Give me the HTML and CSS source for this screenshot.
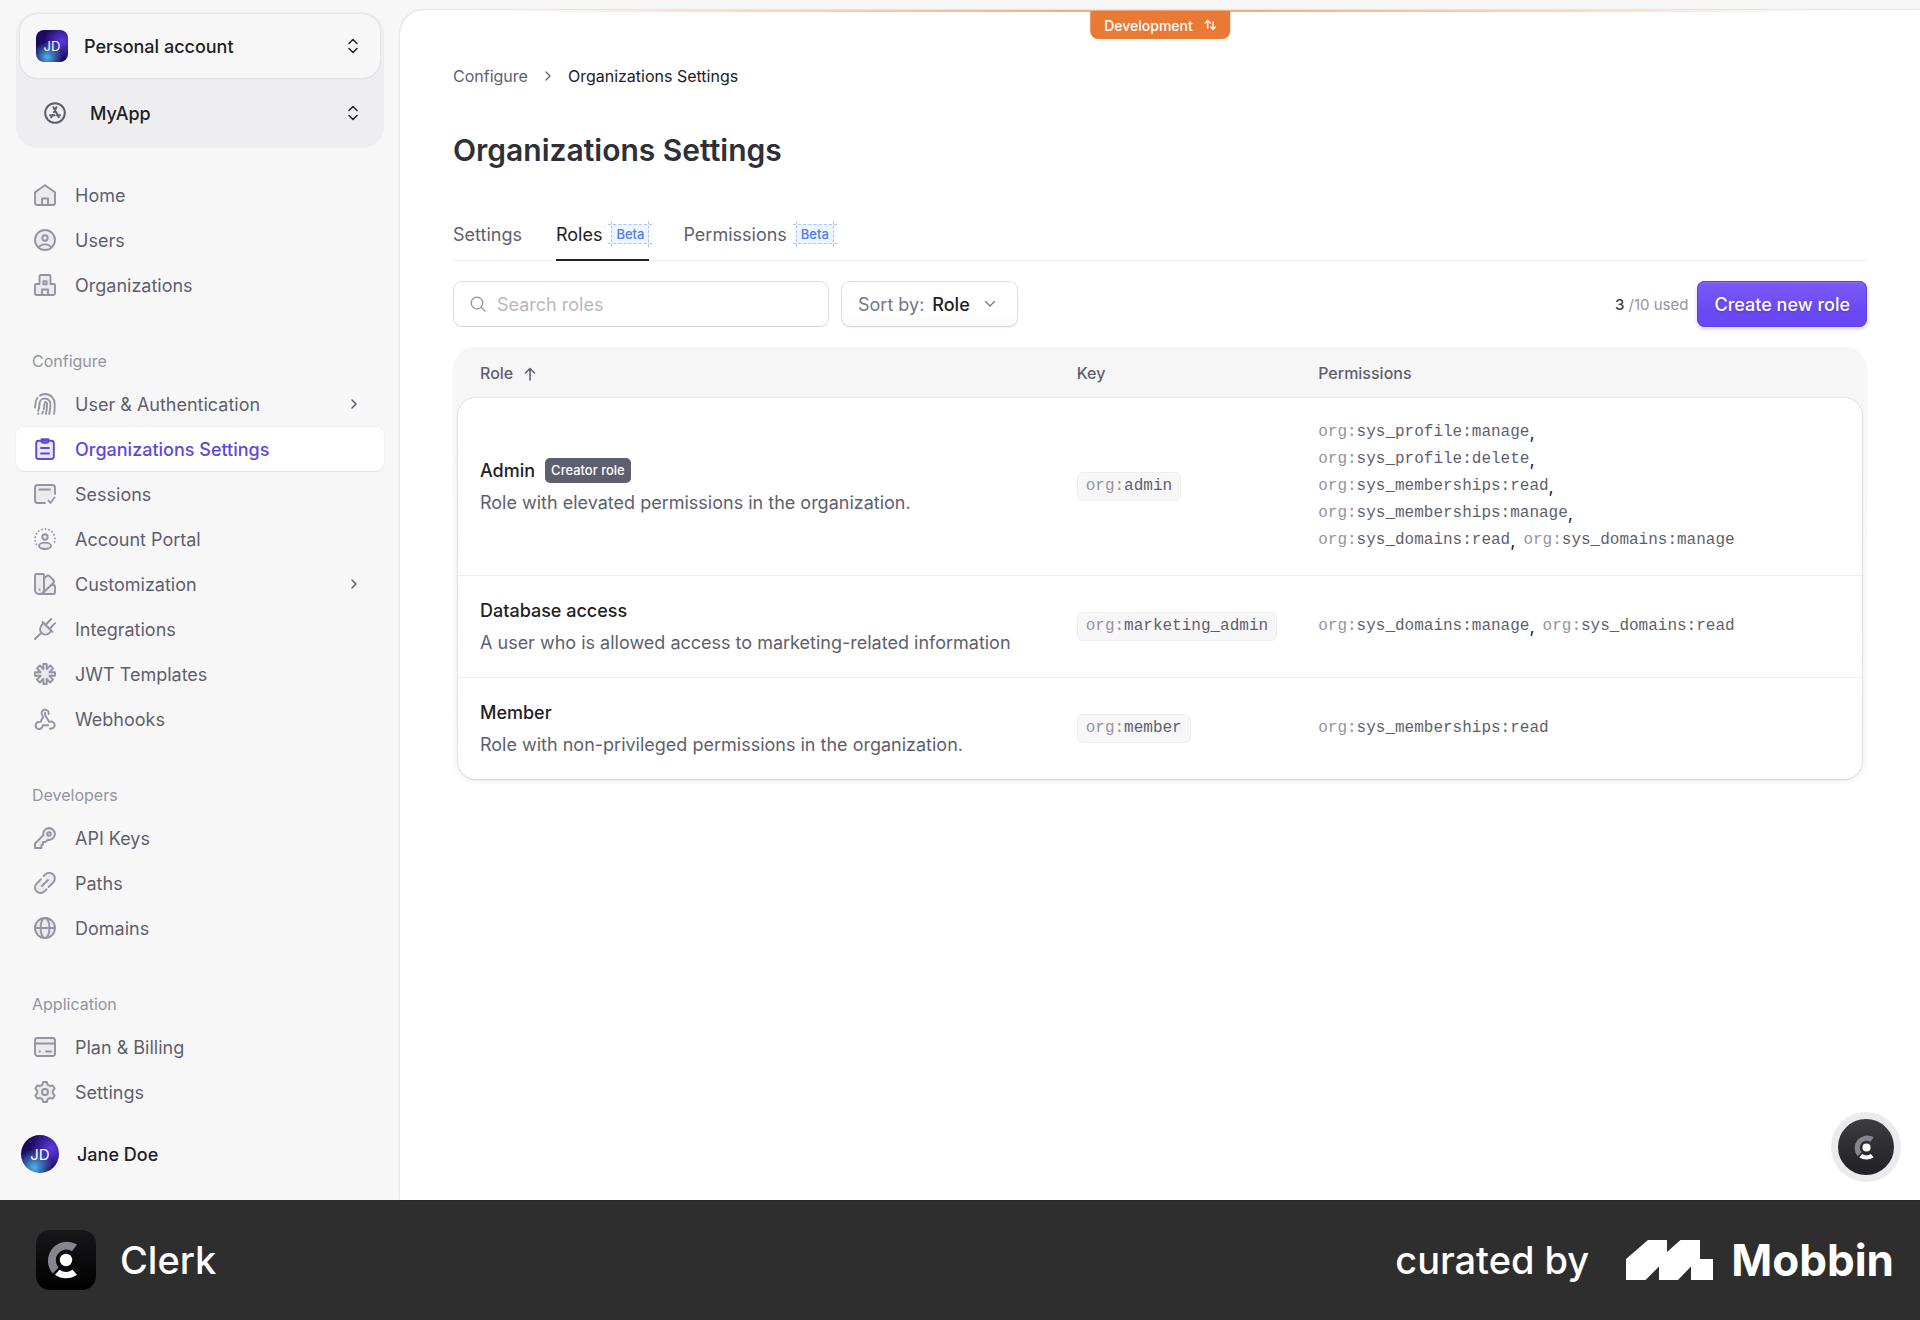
FILE: index.html
```html
<!DOCTYPE html>
<html lang="en">
<head>
    <meta charset="UTF-8">
    <meta name="viewport" content="width=device-width, initial-scale=1.0">
    <title>Organizations Settings</title>
    <link rel="stylesheet" href="styles.css">
</head>
<body>
    <div class="app">
        <aside class="sidebar">
            <div class="switcher">
                <button class="switcher-account" type="button">
                    <span class="avatar avatar-square">JD</span>
                    <span class="switcher-name">Personal account</span>
                    <svg class="updown" viewBox="0 0 12 18"><path d="M2 6.5 6 2.5l4 4M2 11.5l4 4 4-4"/></svg>
                </button>
                <button class="switcher-app" type="button">
                    <svg class="app-icon" viewBox="0 0 22 22"><circle cx="11" cy="11" r="9.8"/><path d="M9.4 5.2 14.8 15M12.4 5.2 10 10.2M8.4 13 7.2 15.4M6 13.2h4.6M13 13.2h3"/></svg>
                    <span class="switcher-name">MyApp</span>
                    <svg class="updown" viewBox="0 0 12 18"><path d="M2 6.5 6 2.5l4 4M2 11.5l4 4 4-4"/></svg>
                </button>
            </div>

            <nav class="nav">
                <a class="nav-link" href="#">
                    <svg class="icon" viewBox="0 0 22 22"><path class="tint" d="M1 8.2 11 1.2l10 7V19a2 2 0 0 1-2 2H3a2 2 0 0 1-2-2z"/><path d="M8 21v-6.5h6V21"/></svg>
                    Home
                </a>
                <a class="nav-link" href="#">
                    <svg class="icon" viewBox="0 0 22 22"><circle class="tint" cx="11" cy="11" r="10"/><circle cx="11" cy="9" r="2.7"/><path d="M4.8 18.6c1.2-2.2 3.4-3.2 6.2-3.2s5 1 6.2 3.2"/></svg>
                    Users
                </a>
                <a class="nav-link" href="#">
                    <svg class="icon" viewBox="0 0 22 22"><path class="tint" d="M5.5 10V2.5A1.5 1.5 0 0 1 7 1h8a1.5 1.5 0 0 1 1.5 1.5V10H20a1 1 0 0 1 1 1v8.5a1.5 1.5 0 0 1-1.5 1.5h-17A1.5 1.5 0 0 1 1 19.5V11a1 1 0 0 1 1-1z"/><path d="M9.4 7.2h3.2v3.2H9.4zM8 21v-5.5h6V21"/></svg>
                    Organizations
                </a>

                <h2 class="nav-title">Configure</h2>
                <a class="nav-link" href="#">
                    <svg class="icon" viewBox="0 0 22 22"><path d="M1 14.5c.4-1.3.5-2.700.5-4.200A9.800 9.800 0 0 1 3.500 5M6 2.600A9.600 9.600 0 0 1 11 1c5.600 0 9.700 4.300 9.700 9.800 0 3.700 0 6.700-.6 10M4.200 17.800c.9-2 1.300-4.600 1.300-7C5.500 7.600 8 5.500 11 5.500s5.400 2.300 5.400 5.500c0 3.500-.2 6.700-1.200 10M4.200 20.800l.2-.4M8.300 20.400l.7-1.800M9.800 16c.5-1.600.6-3.400.6-5.200M11.800 20.800c1-3 1.300-6 1.200-9.800a2 2 0 0 0-2-2"/></svg>
                    User &amp; Authentication
                    <svg class="nav-arrow" viewBox="0 0 8 12"><path d="m2 2 4 4-4 4"/></svg>
                </a>
                <a class="nav-link nav-link-active" href="#">
                    <svg class="icon" viewBox="0 0 22 22"><rect class="tint" x="2.2" y="2.8" width="17.6" height="18.2" rx="2.5"/><path class="tint" d="M7.5 1.2h7v1.6a2 2 0 0 1-2 2h-3a2 2 0 0 1-2-2zM7 10h8M7 15.5h8"/></svg>
                    Organizations Settings
                </a>
                <a class="nav-link" href="#">
                    <svg class="icon" viewBox="0 0 22 22"><path class="tint" stroke="none" d="M1.5 2h19v10l-6 8H2z"/><path d="M11 20H3.5A2.5 2.5 0 0 1 1 17.5v-13A2.5 2.5 0 0 1 3.5 2h15A2.5 2.5 0 0 1 21 4.5V11M5.5 6.5h10.500M14.500 17.500l2 2.500 4-5.500"/></svg>
                    Sessions
                </a>
                <a class="nav-link" href="#">
                    <svg class="icon" viewBox="0 0 22 22"><path class="dots" d="M2.500 16.200A10 10 0 1 1 19.500 16.200"/><circle class="tint" cx="11" cy="9" r="2.700"/><ellipse class="tint" cx="11" cy="17.800" rx="6" ry="3.200"/></svg>
                    Account Portal
                </a>
                <a class="nav-link" href="#">
                    <svg class="icon" viewBox="0 0 22 22"><path class="tint" d="M1 2.5A1.5 1.5 0 0 1 2.5 1h6A1.5 1.5 0 0 1 10 2.5V17a4 4 0 0 1-4 4H5a4 4 0 0 1-4-4z"/><path class="tint" d="M10 5.5 13 2.700a1.500 1.500 0 0 1 2 0l4.800 4.800a1.500 1.500 0 0 1 0 2L9 20M17 12h2.500a1.500 1.500 0 0 1 1.500 1.500v6a1.500 1.500 0 0 1-1.500 1.500H6"/><path d="M5.500 16.500v.2"/></svg>
                    Customization
                    <svg class="nav-arrow" viewBox="0 0 8 12"><path d="m2 2 4 4-4 4"/></svg>
                </a>
                <a class="nav-link" href="#">
                    <svg class="icon" viewBox="0 0 22 22"><path class="tint" d="m9.500 4.800 8 8-1.800 1.800c-2.500 2.500-5.700 2.700-8 .5s-2.200-5.800.2-8.200z"/><path d="M7.400 14.800 1 21M8.500 3.800 18.500 13.800M12 6.500 17.200 1M16 10.500 21 5.200"/></svg>
                    Integrations
                </a>
                <a class="nav-link" href="#">
                    <svg class="icon" viewBox="0 0 22 22"><path class="tint" d="M9.300 1h3.400v5.200l3.500-3.800 2.900 2.900-3.700 3.900H21v3.600h-5.600l3.700 3.900-2.900 2.900-3.500-3.800V21H9.300v-5.200l-3.500 3.800-2.900-2.900 3.700-3.900H1V9.200h5.600L2.900 5.300l2.900-2.900 3.500 3.800z"/></svg>
                    JWT Templates
                </a>
                <a class="nav-link" href="#">
                    <svg class="icon" viewBox="0 0 22 22"><path d="M8.300 7.200a3.500 3.500 0 1 1 6.200-1M11 4.800v2l4.200 7.200a3.600 3.600 0 1 1 .8 6.500M9.200 8.500 6.500 14M5 14a3.500 3.500 0 1 0 3.300 5l.5-1.800h5.400"/></svg>
                    Webhooks
                </a>

                <h2 class="nav-title">Developers</h2>
                <a class="nav-link" href="#">
                    <svg class="icon" viewBox="0 0 22 22"><path class="tint" d="M15 1a6 6 0 1 1-1.200 11.900L11.500 15H9v2.500L7.500 18v3H1v-4.500l8.300-8.300A6 6 0 0 1 15 1z"/><circle cx="15" cy="7" r="1.8"/></svg>
                    API Keys
                </a>
                <a class="nav-link" href="#">
                    <svg class="icon" viewBox="0 0 22 22"><path class="tint" d="m9.500 4.200 1.700-1.700a5.600 5.600 0 0 1 8 0 5.600 5.600 0 0 1 0 8L14.500 15.200M7 7.200 2.600 11.600a5.500 5.500 0 0 0 0 7.800 5.500 5.500 0 0 0 7.800 0l2.100-2.100"/><path d="m8 14 6-6"/></svg>
                    Paths
                </a>
                <a class="nav-link" href="#">
                    <svg class="icon" viewBox="0 0 22 22"><circle class="tint" cx="11" cy="11" r="10"/><ellipse cx="11" cy="11" rx="4.5" ry="10"/><path d="M1 11h20"/></svg>
                    Domains
                </a>

                <h2 class="nav-title">Application</h2>
                <a class="nav-link" href="#">
                    <svg class="icon" viewBox="0 0 22 22"><rect class="tint" x="1" y="2" width="20" height="18" rx="2.5"/><path d="M1 7.5h20M5.500 15.500h.5M12 15.500h5"/></svg>
                    Plan &amp; Billing
                </a>
                <a class="nav-link" href="#">
                    <svg class="icon" viewBox="0 0 22 22"><path class="tint" d="M9.200 1h3.600l1 2.900 2 1.100 3-.6 1.900 3-1.900 2.400v2.400l1.900 2.400-1.900 3-3-.6-2 1.100-1 2.900H9.200l-1-2.900-2-1.100-3 .6-1.900-3 1.900-2.400V9.800L1.300 7.400l1.900-3 3 .6 2-1.100z"/><circle cx="11" cy="11" r="3"/></svg>
                    Settings
                </a>
            </nav>

            <button class="user" type="button">
                <span class="avatar avatar-round">JD</span>
                Jane Doe
            </button>
        </aside>

        <main class="main">
            <button class="env-badge" type="button">
                Development
                <svg class="env-icon" viewBox="0 0 12 12"><path d="M3.500 9V1.500M1 4l2.500-2.500L6 4M8.800 3v7.500M6.500 8l2.300 2.500L11 8"/></svg>
            </button>

            <nav class="breadcrumb">
                <a href="#">Configure</a>
                <svg class="breadcrumb-arrow" viewBox="0 0 8 12"><path d="m2 2 4 4-4 4"/></svg>
                <span class="breadcrumb-current">Organizations Settings</span>
            </nav>

            <h1 class="title">Organizations Settings</h1>

            <nav class="tabs">
                <a class="tab" href="#">Settings</a>
                <a class="tab tab-active" href="#">Roles <span class="beta">Beta</span></a>
                <a class="tab" href="#">Permissions <span class="beta">Beta</span></a>
            </nav>

            <div class="toolbar">
                <label class="search">
                    <svg class="search-icon" viewBox="0 0 16 16"><circle cx="7" cy="7" r="5.8"/><path d="m11.300 11.300 3.700 3.700"/></svg>
                    <input type="search" placeholder="Search roles" aria-label="Search roles">
                </label>
                <div class="sort">
                    <label for="sort">Sort by:</label>
                    <select id="sort">
                        <option>Role</option>
                        <option>Key</option>
                    </select>
                    <svg class="sort-arrow" viewBox="0 0 12 8"><path d="m1.500 1.500 4.500 4.500 4.500-4.500"/></svg>
                </div>
                <p class="usage"><strong>3</strong> /10 used</p>
                <button class="create" type="button">Create new role</button>
            </div>

            <div class="table-wrap">
                <table class="roles">
                    <thead>
                        <tr>
                            <th class="col-role">Role <svg class="sort-up" viewBox="0 0 12 14"><path d="M6 13V1.500M1.500 6 6 1.500 10.500 6"/></svg></th>
                            <th class="col-key">Key</th>
                            <th>Permissions</th>
                        </tr>
                    </thead>
                    <tbody>
                        <tr>
                            <td>
                                <div class="role-name">Admin <span class="creator">Creator role</span></div>
                                <div class="role-desc">Role with elevated permissions in the organization.</div>
                            </td>
                            <td><code class="key"><span class="org">org:</span>admin</code></td>
                            <td>
                                <ul class="perms">
                                    <li><code><span class="org">org:</span>sys_profile:manage</code>,</li>
                                    <li><code><span class="org">org:</span>sys_profile:delete</code>,</li>
                                    <li><code><span class="org">org:</span>sys_memberships:read</code>,</li>
                                    <li><code><span class="org">org:</span>sys_memberships:manage</code>,</li>
                                    <li><code><span class="org">org:</span>sys_domains:read</code>,</li>
                                    <li><code><span class="org">org:</span>sys_domains:manage</code></li>
                                </ul>
                            </td>
                        </tr>
                        <tr>
                            <td>
                                <div class="role-name">Database access</div>
                                <div class="role-desc">A user who is allowed access to marketing-related information</div>
                            </td>
                            <td><code class="key"><span class="org">org:</span>marketing_admin</code></td>
                            <td>
                                <ul class="perms">
                                    <li><code><span class="org">org:</span>sys_domains:manage</code>,</li>
                                    <li><code><span class="org">org:</span>sys_domains:read</code></li>
                                </ul>
                            </td>
                        </tr>
                        <tr>
                            <td>
                                <div class="role-name">Member</div>
                                <div class="role-desc">Role with non-privileged permissions in the organization.</div>
                            </td>
                            <td><code class="key"><span class="org">org:</span>member</code></td>
                            <td>
                                <ul class="perms">
                                    <li><code><span class="org">org:</span>sys_memberships:read</code></li>
                                </ul>
                            </td>
                        </tr>
                    </tbody>
                </table>
            </div>

            <button class="help" type="button" aria-label="Clerk">
                <svg viewBox="0 0 38 38"><path class="logo-arc" d="M30 3.600 25 10.200A10.600 10.600 0 0 0 11.600 26.400L5.800 32.400A19 19 0 0 1 30 3.600z"/><circle class="logo-dot" cx="19" cy="19" r="6.2"/><path class="logo-base" d="M8 33.800 12.500 28.800A11.500 11.500 0 0 0 25.500 28.800L30 33.800A19 19 0 0 1 8 33.800z"/></svg>
            </button>
        </main>
    </div>

    <footer class="footer">
        <div class="footer-logo">
            <svg viewBox="0 0 38 38"><path class="logo-arc" d="M30 3.600 25 10.200A10.600 10.600 0 0 0 11.600 26.400L5.800 32.400A19 19 0 0 1 30 3.600z"/><circle class="logo-dot" cx="19" cy="19" r="6.2"/><path class="logo-base" d="M8 33.800 12.500 28.800A11.500 11.500 0 0 0 25.500 28.800L30 33.800A19 19 0 0 1 8 33.800z"/></svg>
        </div>
        <span class="footer-name">Clerk</span>
        <span class="curated">curated by</span>
        <svg class="mobbin-mark" viewBox="0 0 87 40"><path d="M0 19 22 0h19v12L54.500 0H74v19h13v21H65V26.500L52 40H33V26.500L19.500 40H0z"/></svg>
        <span class="mobbin-name">Mobbin</span>
    </footer>
</body>
</html>
```

FILE: styles.css
```css
* {
    box-sizing: border-box;
}
body {
    margin: 0;
    min-height: 100vh;
    display: flex;
    flex-direction: column;
    font-family: Inter, "Liberation Sans", sans-serif;
    font-size: 18px;
    color: #212126;
    background-color: #f7f7f8;
}
button, input, select {
    font: inherit;
    color: inherit;
}
button {
    border: none;
    background: none;
    padding: 0;
    cursor: pointer;
}
a {
    color: inherit;
    text-decoration: none;
}
svg {
    display: block;
    flex: none;
    fill: none;
    stroke: currentColor;
    stroke-linecap: round;
    stroke-linejoin: round;
}
code {
    font-family: "Liberation Mono", monospace;
    font-size: 16px;
}
.app {
    flex: 1;
    display: flex;
}

/* Sidebar */
.sidebar {
    flex: none;
    width: 400px;
    padding: 12px 16px 27px;
    display: flex;
    flex-direction: column;
}
.switcher {
    padding: 2px 4px 0;
    border-radius: 22px;
    background-color: #eeeef0;
}
.switcher-account, .switcher-app {
    width: 100%;
    display: flex;
    align-items: center;
    font-weight: 500;
    text-align: left;
}
.switcher-account {
    height: 64px;
    padding: 0 21px 0 16px;
    gap: 16px;
    border-radius: 18px;
    background-color: #f7f7f8;
    box-shadow: 0 0 2px rgba(0,0,0,0.1), 0 1px 2px rgba(0,0,0,0.06);
}
.switcher-app {
    height: 70px;
    padding: 0 21px 0 24px;
    gap: 24px;
}
.switcher-name {
    flex: 1;
}
.updown {
    width: 12px;
    height: 18px;
    stroke-width: 1.5;
}
.app-icon {
    width: 22px;
    height: 22px;
    color: #5e5f6e;
    stroke-width: 2;
}
.avatar {
    display: flex;
    align-items: center;
    justify-content: center;
    flex: none;
    color: #fff;
    font-weight: 400;
    background: radial-gradient(circle at 35% 85%, #4fb3ea 0, rgba(79,179,234,0) 45%), radial-gradient(circle at 80% 35%, #5b3be0 0, rgba(91,59,224,0) 55%), #1b0a5e;
}
.avatar-square {
    width: 32px;
    height: 32px;
    border-radius: 8px;
    font-size: 13px;
}
.avatar-round {
    width: 38px;
    height: 38px;
    border-radius: 50%;
    font-size: 15px;
}
.nav {
    margin-top: 25px;
    display: flex;
    flex-direction: column;
    gap: 1px;
}
.nav-link {
    height: 44px;
    padding: 0 26px 0 18px;
    display: flex;
    align-items: center;
    gap: 19px;
    border-radius: 8px;
    color: #5e5f6e;
}
.nav-link-active {
    color: #6047e0;
    font-weight: 500;
    background-color: #fff;
    box-shadow: 0 0 2px rgba(0,0,0,0.1), 0 1px 1px rgba(0,0,0,0.06);
}
.nav-title {
    margin: 43px 0 10px;
    padding-left: 16px;
    font-size: 16px;
    line-height: 20px;
    font-weight: 400;
    color: #9394a1;
}
.icon {
    width: 22px;
    height: 22px;
    color: #9394a1;
    stroke-width: 1.9;
}
.nav-link-active .icon {
    color: #6047e0;
}
.tint {
    fill: currentColor;
    fill-opacity: 0.12;
}
.dots {
    stroke-dasharray: 0 3.6;
    stroke-width: 1.9;
}
.nav-arrow {
    width: 8px;
    height: 12px;
    margin-left: auto;
    stroke-width: 1.5;
}
.user {
    margin: auto auto 0 5px;
    display: flex;
    align-items: center;
    gap: 18px;
    font-weight: 500;
}

/* Main panel */
.main {
    flex: 1;
    min-width: 0;
    position: relative;
    margin-top: 10px;
    padding: 52px 53px;
    border-top-left-radius: 24px;
    background: linear-gradient(90deg, rgba(232,122,54,0) 5%, rgba(232,122,54,0.7) 50%, rgba(232,122,54,0) 95%) top / 100% 2px no-repeat #fff;
    box-shadow: 0 0 2px rgba(0,0,0,0.25);
}
.env-badge {
    position: absolute;
    top: 1px;
    left: 50%;
    transform: translateX(-50%);
    height: 28px;
    padding: 0 14px;
    display: flex;
    align-items: center;
    gap: 11px;
    border-radius: 0 0 8px 8px;
    color: #fff;
    background-color: #e87a36;
    font-size: 14px;
    font-weight: 500;
}
.env-icon {
    width: 12px;
    height: 12px;
    stroke-width: 1.4;
}
.breadcrumb {
    display: flex;
    align-items: center;
    gap: 16px;
    font-size: 16px;
    line-height: 28px;
    color: #5e5f6e;
}
.breadcrumb-arrow {
    width: 8px;
    height: 12px;
    stroke-width: 1.2;
}
.breadcrumb-current {
    color: #212126;
}
.title {
    margin: 40px 0 0;
    font-size: 30px;
    line-height: 40px;
    font-weight: 600;
    color: #2f3037;
}
.tabs {
    margin-top: 39px;
    display: flex;
    gap: 34px;
    border-bottom: 1px solid #eeeef0;
    color: #5e5f6e;
}
.tab {
    height: 52px;
    margin-bottom: -1px;
    display: flex;
    align-items: center;
    gap: 9px;
    border-bottom: 2px solid transparent;
}
.tab-active {
    color: #212126;
    border-color: #212126;
}
.beta {
    position: relative;
    padding: 0 5px;
    background-color: #eff5ff;
    color: #4d7fe8;
    font-size: 13px;
    line-height: 20px;
    font-weight: 500;
}
/* Dashed guides that cross at the corners of the badge */
.beta::before, .beta::after {
    content: "";
    position: absolute;
    border: 0 dashed #a9c6fb;
}
.beta::before {
    inset: 0 -3px;
    border-width: 1px 0;
}
.beta::after {
    inset: -3px 0;
    border-width: 0 1px;
}
.toolbar {
    margin-top: 20px;
    display: flex;
    align-items: center;
}
.search, .sort {
    height: 46px;
    display: flex;
    align-items: center;
    border: 1px solid #dedee2;
    border-bottom-color: #cfcfd4;
    border-radius: 9px;
    background-color: #fff;
}
.search {
    width: 376px;
    padding: 0 16px;
    gap: 11px;
}
.search-icon {
    width: 16px;
    height: 16px;
    color: #9394a1;
    stroke-width: 1.3;
}
.search input {
    flex: 1;
    min-width: 0;
    padding: 0;
    border: none;
    outline: none;
    background: none;
}
.search input::placeholder {
    color: #b7b8c2;
}
.sort {
    margin-left: 12px;
    padding: 0 21px 0 16px;
    box-shadow: 0 1px 2px rgba(0,0,0,0.06);
    background: linear-gradient(#fff 60%, #fafafb);
}
.sort label {
    color: #747686;
}
.sort select {
    appearance: none;
    margin: 0 14px 0 8px;
    padding: 0;
    border: none;
    background: none;
    font-weight: 500;
}
.sort-arrow {
    width: 12px;
    height: 8px;
    color: #747686;
    stroke-width: 1.3;
}
.usage {
    margin: 0 9px 0 auto;
    font-size: 15px;
    color: #9394a1;
}
.usage strong {
    color: #42434d;
    font-weight: 500;
}
.create {
    height: 46px;
    padding: 0 17px;
    border-radius: 8px;
    color: #fff;
    font-weight: 500;
    background: linear-gradient(#7a5cf6, #6a47f5 70%);
    box-shadow: inset 0 0 0 1px #6242e4, inset 0 2px 0 rgba(255,255,255,0.12), 0 2px 4px rgba(98,66,228,0.25);
    text-shadow: 0 1px 2px rgba(0,0,0,0.25);
}

/* Roles table */
.table-wrap {
    margin-top: 20px;
    padding: 0 5px 5px;
    border-radius: 22px;
    background: linear-gradient(#f6f6f7 60px, #fafafb);
}
.roles {
    width: 100%;
    border-collapse: separate;
    border-spacing: 0;
    table-layout: fixed;
}
.roles th {
    height: 51px;
    padding: 0 0 0 22px;
    font-size: 16px;
    font-weight: 500;
    color: #5e5f6e;
    text-align: left;
}
.col-role {
    width: 42.5%;
}
.col-key {
    width: 17.2%;
}
.sort-up {
    display: inline-block;
    width: 12px;
    height: 14px;
    margin-left: 6px;
    vertical-align: -2px;
    stroke-width: 1.6;
}
.roles tbody {
    border-radius: 18px;
    box-shadow: 0 0 2px rgba(0,0,0,0.22), 0 1px 2px rgba(0,0,0,0.12);
}
.roles td {
    padding: 21px 0 21px 22px;
    vertical-align: middle;
    background-color: #fff;
    border-bottom: 1px solid #eeeef0;
}
.roles tr:first-child td:first-child {
    border-top-left-radius: 18px;
}
.roles tr:first-child td:last-child {
    border-top-right-radius: 18px;
}
.roles tr:last-child td {
    border-bottom: none;
}
.roles tr:last-child td:first-child {
    border-bottom-left-radius: 18px;
}
.roles tr:last-child td:last-child {
    border-bottom-right-radius: 18px;
}
.role-name {
    display: flex;
    align-items: center;
    gap: 10px;
    line-height: 27px;
    font-weight: 500;
}
.role-desc {
    margin-top: 5px;
    line-height: 27px;
    color: #5e5f6e;
}
.creator {
    padding: 0 6px;
    border-radius: 5px;
    color: #fff;
    background-color: #5e5f6e;
    font-size: 13px;
    line-height: 25px;
}
.key {
    display: inline-block;
    padding: 0 8px;
    border: 1px solid #eeeef0;
    border-radius: 6px;
    background-color: #f7f7f8;
    line-height: 27px;
    color: #5e5f6e;
}
.org {
    color: #9394a1;
}
.perms {
    max-width: 430px;
    margin: 0;
    padding: 0;
    display: flex;
    flex-wrap: wrap;
    column-gap: 8px;
    list-style: none;
    line-height: 27px;
}
.perms li {
    display: flex;
    align-items: center;
}
.perms code {
    color: #5e5f6e;
}

.help {
    position: absolute;
    right: 19px;
    bottom: 18px;
    width: 70px;
    height: 70px;
    display: flex;
    align-items: center;
    justify-content: center;
    border: 7px solid #ebebed;
    border-radius: 50%;
    background: linear-gradient(#3b3b40, #212125);
}
.help svg {
    width: 25px;
    height: 25px;
}
.logo-arc, .logo-dot, .logo-base {
    stroke: none;
    fill: #fff;
}
.logo-arc {
    fill: #85858d;
}

/* Footer */
.footer {
    height: 120px;
    padding: 0 26px 0 36px;
    display: flex;
    align-items: center;
    color: #fff;
    background-color: #2e2e2e;
    font-size: 38px;
    font-weight: 500;
}
.footer-logo {
    width: 60px;
    height: 60px;
    display: flex;
    align-items: center;
    justify-content: center;
    border-radius: 14px;
    background: linear-gradient(#17171a, #000);
}
.footer-logo svg {
    width: 38px;
    height: 38px;
}
.footer-name {
    margin-left: 24px;
}
.curated {
    margin-left: auto;
}
.mobbin-mark {
    width: 87px;
    height: 40px;
    margin: 0 18px 0 37px;
    fill: #fff;
    stroke: none;
}
.mobbin-name {
    font-size: 44px;
    font-weight: 700;
}
```
